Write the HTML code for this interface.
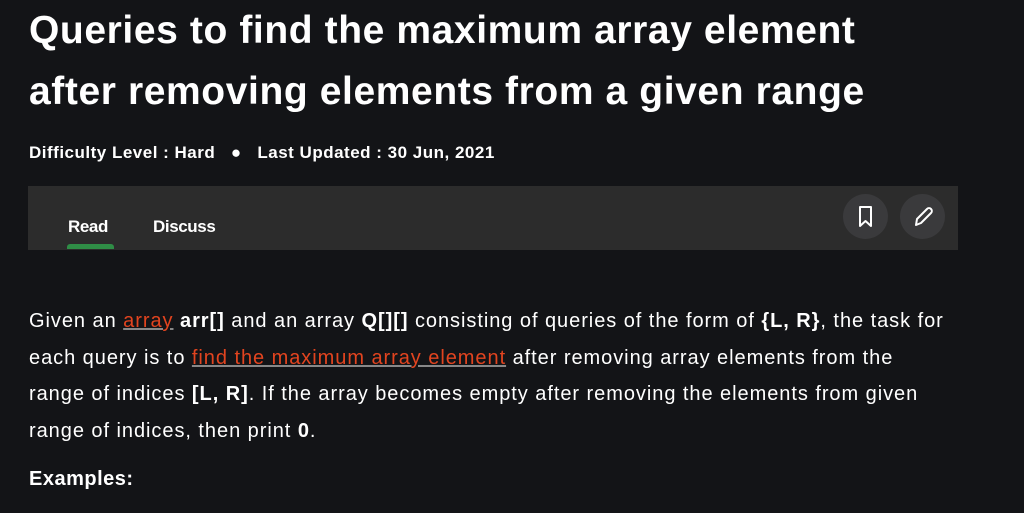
<!DOCTYPE html><html><head><style>
body{margin:0;width:1024px;height:513px;background:#131417;color:#fff;font-family:"Liberation Sans",sans-serif;overflow:hidden;position:relative}
h1{position:absolute;left:29px;top:0px;margin:0;font-size:39px;line-height:61px;font-weight:bold;letter-spacing:0.6px;width:870px}
.meta{position:absolute;left:29px;top:143px;font-size:17px;font-weight:bold;letter-spacing:0.5px}
.bar{position:absolute;left:28px;top:186px;width:930px;height:64px;background:#2c2c2c}
.tab{position:absolute;top:31px;font-size:17px;font-weight:bold;letter-spacing:-0.4px}
.ul{position:absolute;left:39px;top:58px;width:47px;height:5px;background:#2f8d46;border-radius:3px 3px 0 0}
.ic{position:absolute;top:8px;width:45px;height:45px;border-radius:50%;background:#3a3a3c}
.p{position:absolute;left:29px;top:303px;font-size:20px;line-height:36.7px;white-space:nowrap;letter-spacing:0.95px}
a{color:#e2441f;text-decoration:underline;text-decoration-color:#888}
b{font-weight:bold}
.ex{position:absolute;left:29px;top:468px;font-size:20px;font-weight:bold;letter-spacing:0.5px}
</style></head><body>
<h1>Queries to find the maximum array element after removing elements from a given range</h1>
<div class="meta">Difficulty Level : Hard &nbsp;&nbsp;●&nbsp;&nbsp; Last Updated : 30 Jun, 2021</div>
<div class="bar">
<div class="tab" style="left:40px">Read</div><div class="ul"></div>
<div class="tab" style="left:125px">Discuss</div>
<div class="ic" style="left:815px"><svg width="45" height="45" viewBox="0 0 45 45"><path d="M17 13h11v19l-5.5-5-5.5 5z" fill="none" stroke="#fff" stroke-width="2" stroke-linejoin="round"/></svg></div>
<div class="ic" style="left:872px"><svg width="45" height="45" viewBox="0 0 45 45"><path d="M16 31l1-6 10-10a2.5 2.5 0 0 1 4 4l-10 10z" fill="none" stroke="#fff" stroke-width="2" stroke-linejoin="round"/></svg></div>
</div>
<div class="p">Given an <a>array</a> <b>arr[]</b> and an array <b>Q[][]</b> consisting of queries of the form of <b>{L, R}</b>, the task for<br>each query is to <a>find the maximum array element</a> after removing array elements from the<br>range of indices <b>[L, R]</b>. If the array becomes empty after removing the elements from given<br>range of indices, then print <b>0</b>.</div>
<div class="ex">Examples:</div>
</body></html>
